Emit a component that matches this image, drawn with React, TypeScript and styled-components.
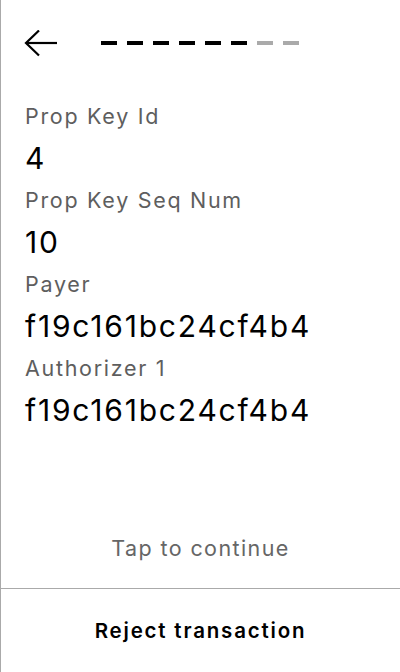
import React from "react";
import styled, {createGlobalStyle} from "styled-components";

const GlobalStyle = createGlobalStyle`
    html, body {
        margin: 0;
        padding: 0;
        background: #fff;
    }
    body {
        font-family: Inter, "Noto Sans", sans-serif;
        color: #000;
    }
`;

const Screen = styled('div')`
    box-sizing: border-box;
    width: 400px;
    height: 672px;
    display: flex;
    flex-direction: column;
    border-left: 1px solid #aaa;
    background: #fff;
`;

const Header = styled('div')`
    display: flex;
    align-items: center;
    gap: 43px;
    padding: 30px 23px 0;
`;

const BackButton = styled('button')`
    display: flex;
    padding: 0;
    border: none;
    background: none;
    cursor: pointer;
`;

const Progress = styled('div')`
    display: flex;
    gap: 10px;
    margin-bottom: 2px;
`;

const Dash = styled('span')<{ $done: boolean }>`
    width: 16px;
    height: 4px;
    background: ${p => p.$done ? '#000' : '#aaa'};
`;

const Fields = styled('div')`
    display: flex;
    flex-direction: column;
    padding: 42px 24px 0;
`;

const Label = styled('div')`
    font-size: 21.5px;
    line-height: 32px;
    letter-spacing: 1.7px;
    color: #5e5e5e;
`;

const Value = styled('div')`
    font-size: 30px;
    line-height: 52px;
    letter-spacing: 1.8px;
    color: #000;
`;

const Spacer = styled('div')`
    flex: 1;
`;

const Hint = styled('div')`
    font-size: 21.5px;
    line-height: 24px;
    letter-spacing: 1.4px;
    color: #666;
    text-align: center;
    padding-bottom: 28px;
    border-bottom: 1px solid #aaa;
`;

const RejectButton = styled('button')`
    height: 83px;
    border: none;
    background: none;
    font-family: Inter, "Noto Sans", sans-serif;
    font-size: 20.5px;
    font-weight: 600;
    letter-spacing: 1.8px;
    color: #000;
    cursor: pointer;
`;

const fields = [
    {label: 'Prop Key Id', value: '4'},
    {label: 'Prop Key Seq Num', value: '10'},
    {label: 'Payer', value: 'f19c161bc24cf4b4'},
    {label: 'Authorizer 1', value: 'f19c161bc24cf4b4'},
];

const steps = [true, true, true, true, true, true, false, false];

const BackArrow = () => (
    <svg width="34" height="28" viewBox="0 0 34 28" fill="none" stroke="#000" strokeWidth="2.2">
        <line x1="2" y1="13" x2="33" y2="13"/>
        <polyline points="15,0.5 2,13 15,25.5"/>
    </svg>
);

const App: React.FC = () => {
    return (
        <>
            <GlobalStyle/>
            <Screen>
                <Header>
                    <BackButton aria-label="Back"><BackArrow/></BackButton>
                    <Progress>
                        {steps.map((done, i) => <Dash key={i} $done={done}/>)}
                    </Progress>
                </Header>
                <Fields>
                    {fields.map(f => (
                        <React.Fragment key={f.label}>
                            <Label>{f.label}</Label>
                            <Value>{f.value}</Value>
                        </React.Fragment>
                    ))}
                </Fields>
                <Spacer/>
                <Hint>Tap to continue</Hint>
                <RejectButton>Reject transaction</RejectButton>
            </Screen>
        </>
    )
}

export default App;
